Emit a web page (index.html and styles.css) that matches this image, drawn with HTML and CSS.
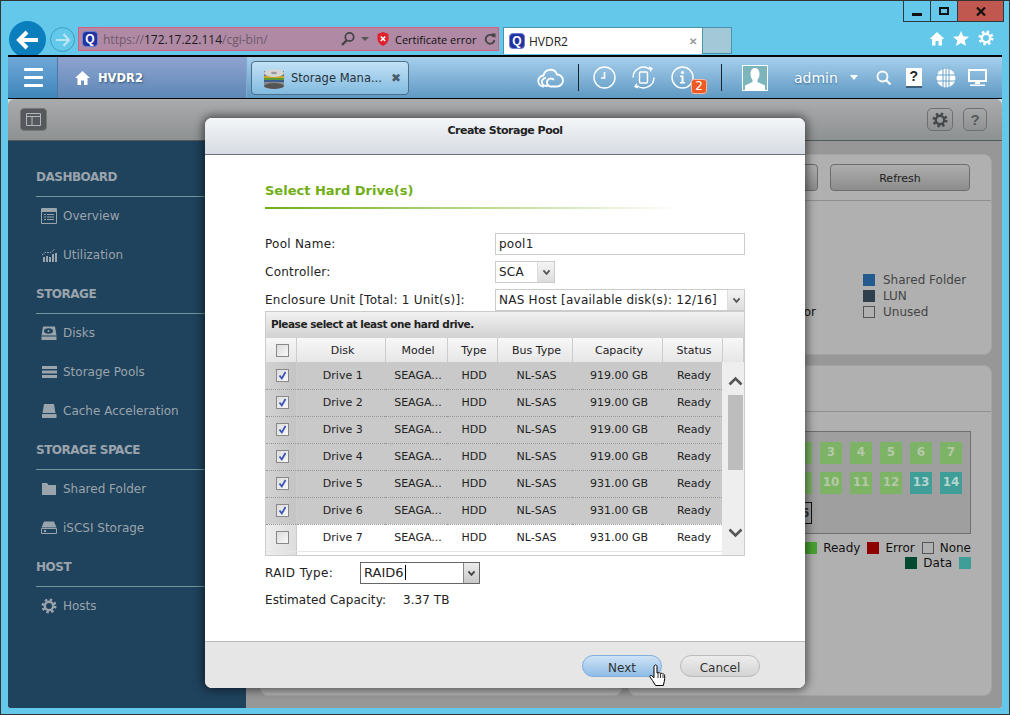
FILE: index.html
```html
<!DOCTYPE html>
<html lang="en">
<head>
    <meta charset="UTF-8">
    <title>HVDR2</title>
    <link rel="stylesheet" href="styles.css">
</head>
<body>
<svg class="defs" width="0" height="0">
    <symbol id="tick" viewBox="0 0 13 13"><path d="M3.500 6.500l2.300 3L9.500 3" fill="none" stroke="#3a55b5" stroke-width="1.800"/></symbol>
    <symbol id="gear" viewBox="0 0 16 16"><circle cx="8" cy="8" r="4.200" fill="none" stroke="currentColor" stroke-width="2.400"/><circle cx="8" cy="8" r="6.200" fill="none" stroke="currentColor" stroke-width="2.600" stroke-dasharray="2.400 2.470"/></symbol>
    <symbol id="arrow-down" viewBox="0 0 10 8"><path d="M1.500 1.500L5 5.500l3.500-4" fill="none" stroke="currentColor" stroke-width="2"/></symbol>
</svg>
<div class="window">
    <header class="chrome">
        <div class="nav-btn back"><svg width="24" height="20" viewBox="0 0 24 20"><path d="M11 2L3 10l8 8M3 10h19" fill="none" stroke="#fff" stroke-width="4"/></svg></div>
        <div class="nav-btn forward"><svg width="16" height="14" viewBox="0 0 16 14"><path d="M8.500 1L14 7l-5.500 6M14 7H1" fill="none" stroke="#b9e6f5" stroke-width="2.200"/></svg></div>
        <div class="address">
            <span class="favicon">Q</span>
            <span class="url">https://<b>172.17.22.114</b>/cgi-bin/</span>
            <svg class="addr-search" width="16" height="16" viewBox="0 0 16 16"><circle cx="9.500" cy="6" r="4.200" fill="none" stroke="#444" stroke-width="1.800"/><path d="M6.500 9.500L2 14" stroke="#444" stroke-width="2.400"/></svg>
            <span class="addr-caret"></span>
            <svg class="shield" width="12" height="14" viewBox="0 0 12 14"><path d="M6 0l5.500 2v5c0 3-2.500 5.500-5.500 7C3 12.500.5 10 .5 7V2z" fill="#e0202a"/><path d="M3.800 4.500l4.400 4.500M8.200 4.500L3.800 9" stroke="#fff" stroke-width="1.600"/></svg>
            <span class="cert">Certificate error</span>
            <svg class="addr-refresh" width="12" height="12" viewBox="0 0 12 12"><path d="M9.800 4A4.400 4.400 0 1 0 10.400 7" fill="none" stroke="#444" stroke-width="1.800"/><path d="M7 .5h4.500V5z" fill="#444"/></svg>
        </div>
        <div class="ie-tab">
            <span class="favicon">Q</span>
            <span class="ie-tab-title">HVDR2</span>
            <span class="ie-tab-close">✕</span>
        </div>
        <div class="ie-tab-new"></div>
        <div class="chrome-right">
            <div class="win-controls">
                <div class="win-btn"><span class="win-min"></span></div>
                <div class="win-btn"><span class="win-max"></span></div>
                <div class="win-btn close"><svg width="10" height="9" viewBox="0 0 10 9"><path d="M1 .5l8 8M9 .5l-8 8" stroke="#111" stroke-width="2.200"/></svg></div>
            </div>
            <div class="chrome-icons">
                <svg width="16" height="15" viewBox="0 0 16 15"><path d="M8 1L.5 8H3v6.500h3.500V10h3v4.500H13V8h2.500z" fill="#fff"/></svg>
                <svg width="16" height="15" viewBox="0 0 16 15"><path d="M8 0l2.300 5.200 5.700.5-4.300 3.700 1.300 5.600L8 12l-5 3 1.300-5.600L0 5.700l5.700-.5z" fill="#fff"/></svg>
                <svg class="chrome-gear" width="16" height="16"><use href="#gear"/></svg>
            </div>
        </div>
    </header>

    <div class="app">
        <nav class="topnav">
            <div class="menu-btn"><span></span><span></span><span></span></div>
            <div class="host">
                <svg width="15" height="15" viewBox="0 0 15 15"><path d="M7.500 1L0 8h2.500v7h3.500v-4.500h3V15h3.500V8H15z" fill="#fff"/></svg>
                <span>HVDR2</span>
            </div>
            <div class="app-tab">
                <svg width="22" height="21" viewBox="0 0 22 21">
                    <rect x="1" y="3" width="20" height="15" fill="#777"/>
                    <rect x="1" y="8" width="20" height="2" fill="#c9a52a"/>
                    <rect x="1" y="10" width="20" height="2" fill="#5d9a35"/>
                    <rect x="1" y="12" width="20" height="2" fill="#3b5f8f"/>
                    <rect x="1" y="14" width="20" height="4" fill="#8a8a8a"/>
                    <ellipse cx="11" cy="18" rx="10" ry="3" fill="#555"/>
                    <ellipse cx="11" cy="5" rx="10" ry="4" fill="#d5d5d5"/>
                    <ellipse cx="11" cy="5" rx="3" ry="1.200" fill="#999"/>
                </svg>
                <span class="app-tab-title">Storage Mana...</span>
                <span class="app-tab-close">✖</span>
            </div>
            <div class="tools">
                <svg class="t-cloud" width="27" height="20" viewBox="0 0 27 20"><path d="M7 18.500a5.500 5.500 0 0 1-.5-11A7 7 0 0 1 20 6.500a5.800 5.800 0 0 1 0 12h-6a4 4 0 1 1 3-6.500M9 10a4 4 0 1 0 3 6.500" fill="none" stroke="#fff" stroke-width="1.800"/></svg>
                <span class="t-sep"></span>
                <svg class="t-clock" width="23" height="23" viewBox="0 0 23 23"><circle cx="11.500" cy="11.500" r="10.500" fill="none" stroke="#fff" stroke-width="1.400"/><path d="M11.500 6v6H8" fill="none" stroke="#fff" stroke-width="1.600"/></svg>
                <svg class="t-sync" width="23" height="23" viewBox="0 0 23 23"><rect x="7.500" y="6" width="8" height="11" rx="1" fill="none" stroke="#fff" stroke-width="1.400"/><path d="M1 11.500A10.500 10.500 0 0 1 17.500 3M22 11.500A10.500 10.500 0 0 1 5.500 20" fill="none" stroke="#fff" stroke-width="1.400"/><path d="M16.500 .5L21 2l-2.500 4zM6.500 22.500L2 21l2.500-4z" fill="#fff"/></svg>
                <div class="t-info">
                    <svg width="23" height="23" viewBox="0 0 23 23"><circle cx="11.500" cy="11.500" r="10.500" fill="none" stroke="#fff" stroke-width="1.400"/><circle cx="11.500" cy="6.500" r="1.600" fill="#fff"/><path d="M9 9.500h3.500V16H14v1.500H9V16h1.500v-5H9z" fill="#fff"/></svg>
                    <span class="badge">2</span>
                </div>
                <span class="t-sep second"></span>
                <div class="avatar"><svg width="24" height="24" viewBox="0 0 24 24"><path d="M7.500 8c0-4 2-6 4.500-6s4.500 2 4.500 6c0 2.500-1 4.500-2 6v2l7.500 3.500V24H2v-4.500L9.500 16v-2c-1-1.500-2-3.500-2-6z" fill="#fff"/></svg></div>
                <span class="user">admin</span>
                <span class="user-caret"></span>
                <svg class="t-search" width="15" height="15" viewBox="0 0 15 15"><circle cx="6.500" cy="6.500" r="5" fill="none" stroke="#fff" stroke-width="1.800"/><path d="M10 10l4.500 4.500" stroke="#fff" stroke-width="2"/></svg>
                <div class="t-help"><span>?</span></div>
                <svg class="t-globe" width="20" height="20" viewBox="0 0 20 20"><circle cx="10" cy="10" r="9.500" fill="#fff"/><path d="M0 7h20M0 13h20M7 0v20M13 0v20M10 0v20" stroke="#6ba3c9" stroke-width="1"/></svg>
                <svg class="t-monitor" width="19" height="18" viewBox="0 0 19 18"><rect x="1" y="1" width="17" height="11" fill="none" stroke="#fff" stroke-width="2"/><path d="M7 13h5v2H7zM2 15.500h15V17H2z" fill="#fff"/></svg>
            </div>
        </nav>

        <div class="workspace">
            <div class="toolbar">
                <div class="tb-layout"><svg width="15" height="13" viewBox="0 0 15 13"><path d="M.5.500h14v12H.5zM.5 3.500h14M6 3.500v9" fill="none" stroke="#b5b8bb"/></svg></div>
                <div class="tb-btn gear-btn"><svg width="16" height="16"><use href="#gear"/></svg></div>
                <div class="tb-btn help-btn">?</div>
            </div>
            <div class="content">
                <aside class="sidebar">
                    <div class="side-head">DASHBOARD</div>
                    <div class="side-item">
                        <svg width="16" height="16" viewBox="0 0 16 16"><path d="M.5.500h15v15H.5z" fill="none" stroke="#9aa4ac"/><path d="M1 1h14v3H1z" fill="#9aa4ac"/><path d="M3 6h2v1H3zM6 6h7v1H6zM3 8.500h2v1H3zM6 8.500h7v1H6zM3 11h2v1H3zM6 11h7v1H6z" fill="#9aa4ac"/></svg>
                        <span>Overview</span>
                    </div>
                    <div class="side-item">
                        <svg width="16" height="16" viewBox="0 0 16 16"><path d="M2 10h2v5H2zM5 9h2v6H5zM8 10h2v5H8zM11 7h2v8h-2zM14 6h2v9h-2z" fill="#9aa4ac"/><path d="M1 8l4-3 4 1 5-4" fill="none" stroke="#9aa4ac" stroke-dasharray="2 1"/></svg>
                        <span>Utilization</span>
                    </div>
                    <div class="side-head">STORAGE</div>
                    <div class="side-item">
                        <svg width="16" height="16" viewBox="0 0 16 16"><path d="M2 1.500h12l1.500 9H.5z" fill="#9aa4ac"/><ellipse cx="7.500" cy="6" rx="4.500" ry="2.800" fill="#1f425d"/><circle cx="7.500" cy="6" r="1" fill="#9aa4ac"/><path d="M.5 11.500h15v3.500H.5z" fill="#9aa4ac"/></svg>
                        <span>Disks</span>
                    </div>
                    <div class="side-item">
                        <svg width="16" height="14" viewBox="0 0 16 14"><path d="M1 1h15v3H1zM1 5.500h15v3H1zM1 10h15v3H1z" fill="#9aa4ac"/></svg>
                        <span>Storage Pools</span>
                    </div>
                    <div class="side-item">
                        <svg width="16" height="14" viewBox="0 0 16 14"><path d="M3 0h10l1.500 9h-13zM1 10h14.500v4H1z" fill="#9aa4ac"/></svg>
                        <span>Cache Acceleration</span>
                    </div>
                    <div class="side-head">STORAGE SPACE</div>
                    <div class="side-item">
                        <svg width="16" height="13" viewBox="0 0 16 13"><path d="M1 1h5l1.500 2H15v10H1z" fill="#9aa4ac"/></svg>
                        <span>Shared Folder</span>
                    </div>
                    <div class="side-item">
                        <svg width="16" height="13" viewBox="0 0 16 13"><path d="M3 .5h10l2.500 6H.5z" fill="#9aa4ac"/><path d="M.5 7.500h15v5H.5z" fill="none" stroke="#9aa4ac"/><circle cx="4" cy="10" r="1.200" fill="#9aa4ac"/></svg>
                        <span>iSCSI Storage</span>
                    </div>
                    <div class="side-head">HOST</div>
                    <div class="side-item">
                        <svg width="16" height="16"><use href="#gear"/></svg>
                        <span>Hosts</span>
                    </div>
                </aside>

                <main class="panels">
                    <section class="panel">
                        <div class="panel-head">
                            <div class="bg-btn"></div>
                            <div class="bg-btn refresh">Refresh</div>
                        </div>
                    </section>
                    <section class="panel right">
                        <div class="panel-head">
                            <div class="bg-btn"></div>
                            <div class="bg-btn refresh">Refresh</div>
                        </div>
                        <div class="usage">
                            <span class="usage-error">Error</span>
                            <ul class="usage-legend">
                                <li><i class="sw sw-blue"></i>Shared Folder</li>
                                <li><i class="sw sw-slate"></i>LUN</li>
                                <li><i class="sw sw-empty"></i>Unused</li>
                            </ul>
                        </div>
                    </section>
                    <section class="panel"></section>
                    <section class="panel right">
                        <div class="panel-head"></div>
                        <div class="rack">
                            <div class="disks">
                                <span class="disk">1</span><span class="disk">2</span><span class="disk">3</span><span class="disk">4</span><span class="disk">5</span><span class="disk">6</span><span class="disk">7</span>
                                <span class="disk">8</span><span class="disk">9</span><span class="disk">10</span><span class="disk">11</span><span class="disk">12</span><span class="disk data">13</span><span class="disk data">14</span>
                                <span class="disk none">15</span><span class="disk none">16</span>
                            </div>
                        </div>
                        <div class="rack-legend">
                            <i class="sw sw-green"></i><span>Ready</span>
                            <i class="sw sw-red"></i><span>Error</span>
                            <i class="sw sw-empty"></i><span>None</span>
                        </div>
                        <div class="rack-legend">
                            <i class="sw sw-dark"></i><span>Data</span>
                            <i class="sw sw-teal"></i>
                        </div>
                    </section>
                </main>
            </div>
        </div>
    </div>

    <div class="dialog">
        <div class="dialog-title">Create Storage Pool</div>
        <div class="dialog-body">
            <h2>Select Hard Drive(s)</h2>
            <div class="h-rule"></div>
            <div class="form">
                <label>Pool Name:</label>
                <div class="field">pool1</div>
                <label>Controller:</label>
                <div class="field short">SCA<span class="drop"><svg width="9" height="7"><use href="#arrow-down"/></svg></span></div>
                <label>Enclosure Unit [Total: 1 Unit(s)]:</label>
                <div class="field">NAS Host [available disk(s): 12/16]<span class="drop"><svg width="9" height="7"><use href="#arrow-down"/></svg></span></div>
            </div>
            <div class="grid">
                <div class="grid-title">Please select at least one hard drive.</div>
                <table class="grid-head">
                    <colgroup><col class="c0"><col class="c1"><col class="c2"><col class="c3"><col class="c4"><col class="c5"><col class="c6"><col></colgroup>
                    <tr><th><span class="check"></span></th><th>Disk</th><th>Model</th><th>Type</th><th>Bus Type</th><th>Capacity</th><th>Status</th><th></th></tr>
                </table>
                <div class="grid-main">
                    <table class="grid-body">
                        <colgroup><col class="c0"><col class="c1"><col class="c2"><col class="c3"><col class="c4"><col class="c5"><col class="c6"></colgroup>
                        <tr class="sel"><td><span class="check"><svg width="13" height="13"><use href="#tick"/></svg></span></td><td>Drive 1</td><td>SEAGA...</td><td>HDD</td><td>NL-SAS</td><td>919.00 GB</td><td>Ready</td></tr>
                        <tr class="sel"><td><span class="check"><svg width="13" height="13"><use href="#tick"/></svg></span></td><td>Drive 2</td><td>SEAGA...</td><td>HDD</td><td>NL-SAS</td><td>919.00 GB</td><td>Ready</td></tr>
                        <tr class="sel"><td><span class="check"><svg width="13" height="13"><use href="#tick"/></svg></span></td><td>Drive 3</td><td>SEAGA...</td><td>HDD</td><td>NL-SAS</td><td>919.00 GB</td><td>Ready</td></tr>
                        <tr class="sel"><td><span class="check"><svg width="13" height="13"><use href="#tick"/></svg></span></td><td>Drive 4</td><td>SEAGA...</td><td>HDD</td><td>NL-SAS</td><td>919.00 GB</td><td>Ready</td></tr>
                        <tr class="sel"><td><span class="check"><svg width="13" height="13"><use href="#tick"/></svg></span></td><td>Drive 5</td><td>SEAGA...</td><td>HDD</td><td>NL-SAS</td><td>931.00 GB</td><td>Ready</td></tr>
                        <tr class="sel"><td><span class="check"><svg width="13" height="13"><use href="#tick"/></svg></span></td><td>Drive 6</td><td>SEAGA...</td><td>HDD</td><td>NL-SAS</td><td>931.00 GB</td><td>Ready</td></tr>
                        <tr><td><span class="check"></span></td><td>Drive 7</td><td>SEAGA...</td><td>HDD</td><td>NL-SAS</td><td>931.00 GB</td><td>Ready</td></tr>
                        <tr><td></td><td></td><td></td><td></td><td></td><td></td><td></td></tr>
                    </table>
                    <div class="scrollbar">
                        <svg class="sb-up" width="15" height="10" viewBox="0 0 15 10"><path d="M1.500 8.500l6-6 6 6" fill="none" stroke="#555" stroke-width="2.600"/></svg>
                        <div class="sb-thumb"></div>
                        <svg class="sb-down" width="15" height="10" viewBox="0 0 15 10"><path d="M1.500 1.500l6 6 6-6" fill="none" stroke="#555" stroke-width="2.600"/></svg>
                    </div>
                </div>
            </div>
            <div class="raid">
                <label>RAID Type:</label>
                <div class="combo"><span class="combo-text"><span class="caret-text">RAID6</span></span><span class="combo-drop"><svg width="9" height="7"><use href="#arrow-down"/></svg></span></div>
            </div>
            <div class="estimate"><span>Estimated Capacity:</span><span>3.37 TB</span></div>
        </div>
        <div class="dialog-foot">
            <div class="pill primary">Next</div>
            <div class="pill">Cancel</div>
        </div>
        <svg class="hand" width="19" height="23" viewBox="0 0 18 23"><path d="M5 1.500c1-1 2.500-.5 2.500 1V9l1-.3c1-.3 1.800 0 2 .7 1-.5 2-.2 2.300.6 1-.4 2.200.2 2.300 1.300.2 2 .2 4-.3 6l-1 4.200H6l-3-5-2.500-3.500c-.5-1 .5-2 1.500-1.500l2.500 2.200V3c0-.6 0-1 .5-1.500z" fill="#fff" stroke="#000"/><path d="M8.500 9v5M11 10v4M13.500 11v3" stroke="#000" stroke-width=".8"/></svg>
    </div>
</div>
</body>
</html>
```

FILE: styles.css
```css
* {
    box-sizing: border-box;
}

body {
    margin: 0;
    font-family: "DejaVu Sans", Verdana, sans-serif;
    font-size: 12px;
}

.defs {
    position: absolute;
}

.window {
    position: relative;
    width: 1010px;
    height: 715px;
    overflow: hidden;
    background: #64c8ea;
    border: 1px solid #333;
}

/* browser chrome */
.chrome {
    display: flex;
    height: 54px;
    padding-left: 8px;
    font-family: "Open Sans", sans-serif;
}

.nav-btn {
    display: flex;
    align-items: center;
    justify-content: center;
    border-radius: 50%;
    flex: none;
}

.back {
    width: 37px;
    height: 37px;
    margin-top: 20px;
    background: #0b7fbd;
}

.forward {
    width: 25px;
    height: 25px;
    margin: 26px 3px 0 4px;
    border: 1px solid #3f9cc0;
}

.address {
    display: flex;
    align-items: center;
    width: 421px;
    height: 24px;
    margin-top: 26px;
    padding-left: 3px;
    flex: none;
    background: #b08aa5;
    border: 1px solid #d65f7f;
}

.favicon {
    width: 16px;
    height: 16px;
    flex: none;
    border-radius: 4px;
    background: #22339f;
    border: 1px solid #6d7fd0;
    color: #fff;
    font: bold 12px/14px "Liberation Sans", sans-serif;
    text-align: center;
}

.url {
    width: 237px;
    margin-left: 5px;
    color: #6e5a6c;
    font-size: 12px;
}

.url b {
    color: #1c1c1c;
    font-weight: 400;
}

.addr-caret {
    width: 0;
    height: 0;
    margin: 0 8px 0 5px;
    border: 4px solid transparent;
    border-top-color: #555;
    border-bottom: 0;
}

.cert {
    width: 89px;
    margin-left: 6px;
    color: #111;
    font-size: 11px;
    white-space: nowrap;
}

.ie-tab {
    display: flex;
    align-items: center;
    width: 200px;
    height: 27px;
    margin: 26px 0 0 4px;
    padding-left: 5px;
    flex: none;
    background: #fff;
    border: 1px solid #4a93ac;
    border-bottom: 0;
}

.ie-tab-title {
    margin-left: 4px;
    color: #222;
    font-size: 12px;
}

.ie-tab-close {
    margin-left: auto;
    margin-right: 5px;
    color: #999;
    font-size: 10px;
    font-weight: 700;
}

.ie-tab-new {
    width: 29px;
    height: 27px;
    margin-top: 26px;
    flex: none;
    background: #a3c8d8;
    border: 1px solid #4a93ac;
    border-width: 0 1px 1px 0;
    border-top: 1px solid #4a93ac;
}

.chrome-right {
    display: flex;
    flex-direction: column;
    align-items: flex-end;
    margin-left: auto;
    padding-right: 5px;
}

.win-controls {
    display: flex;
    height: 21px;
    border: 1px solid #2b3a40;
    border-top: 0;
}

.win-btn {
    display: flex;
    align-items: center;
    justify-content: center;
    width: 27px;
    border-right: 1px solid #2b3a40;
}

.win-btn.close {
    width: 45px;
    border-right: 0;
    background: #c0584f;
}

.win-min {
    width: 10px;
    height: 3px;
    margin-top: 6px;
    background: #111;
}

.win-max {
    width: 10px;
    height: 8px;
    border: 2px solid #111;
}

.chrome-icons {
    display: flex;
    align-items: center;
    gap: 8px;
    margin-top: 8px;
    padding-right: 10px;
}

.chrome-gear {
    margin-left: 1px;
    color: #fff;
}

/* app */
.app {
    display: flex;
    flex-direction: column;
    position: relative;
    width: 994px;
    height: 653px;
    margin-left: 7px;
    background: #cfe6f2;
}

.topnav {
    display: flex;
    height: 44px;
    flex: none;
    background: linear-gradient(#a6cfec, #5f99c3);
    border-top: 2px solid #050505;
    border-bottom: 1px solid #050505;
}

.menu-btn {
    display: flex;
    flex-direction: column;
    justify-content: center;
    gap: 5px;
    width: 50px;
    padding-left: 16px;
    background: linear-gradient(#6fa8d8, #3f86ba);
    border-right: 1px solid #5076a8;
}

.menu-btn span {
    width: 19px;
    height: 3px;
    border-radius: 1px;
    background: #fff;
}

.host {
    display: flex;
    align-items: center;
    gap: 8px;
    width: 189px;
    padding-left: 17px;
    background: linear-gradient(#8fa3d0, #5d88b6);
    border-right: 1px solid #83a7c9;
    color: #fff;
    font-size: 11.500px;
    font-weight: 700;
    text-shadow: 1px 1px 2px #33577a;
}

.app-tab {
    display: flex;
    align-items: center;
    width: 158px;
    height: 34px;
    margin: 4px 0 0 4px;
    padding-left: 11px;
    background: linear-gradient(#c2e1f5, #82bbdf);
    border: 1px solid #4c6f8c;
    border-radius: 4px;
}

.app-tab-title {
    margin-left: 6px;
    color: #26323c;
    font-size: 11.500px;
    white-space: nowrap;
}

.app-tab-close {
    margin-left: 9px;
    color: #4a5c6c;
    font-size: 12px;
}

.tools {
    display: flex;
    align-items: center;
    color: #fff;
}

.tools svg,
.tools div,
.tools span {
    flex: none;
}

.t-cloud {
    margin-left: 128px;
}

.t-sep {
    width: 1px;
    height: 27px;
    margin-left: 14px;
    background: #16222c;
}

.t-clock {
    margin-left: 14px;
}

.t-sync {
    margin-left: 16px;
}

.t-info {
    position: relative;
    width: 23px;
    height: 23px;
    margin-left: 16px;
}

.badge {
    position: absolute;
    left: 20px;
    top: 13px;
    width: 16px;
    height: 15px;
    border-radius: 3px;
    background: #ee5a24;
    border: 1px solid #f6b9a0;
    color: #fff;
    font-size: 12px;
    line-height: 13px;
    text-align: center;
}

.t-sep.second {
    margin-left: 27px;
}

.avatar {
    display: flex;
    align-items: flex-end;
    justify-content: center;
    width: 26px;
    height: 26px;
    margin-left: 20px;
    background: #7db5bd;
    border: 1px solid #fff;
}

.user {
    margin-left: 26px;
    font-size: 14px;
    text-shadow: 0 1px 2px #3b6d92;
}

.user-caret {
    width: 0;
    height: 0;
    margin-left: 12px;
    border: 4px solid transparent;
    border-top: 5px solid #fff;
    border-bottom: 0;
}

.t-search {
    margin-left: 18px;
}

.t-help {
    width: 16px;
    height: 20px;
    margin-left: 15px;
    background: #fff;
    border-bottom: 2px solid #3c5f78;
    color: #222;
    font: bold 14px/17px "Liberation Sans", sans-serif;
    text-align: center;
}

.t-globe {
    margin-left: 14px;
}

.t-monitor {
    margin-left: 12px;
}

.workspace {
    display: flex;
    flex-direction: column;
    flex: 1;
    overflow: hidden;
    border-radius: 6px 6px 2px 2px;
}

.toolbar {
    display: flex;
    align-items: center;
    height: 42px;
    flex: none;
    padding: 0 15px 0 12px;
    background: linear-gradient(#aaabac, #8e9192);
    border-bottom: 1px solid #515a5c;
}

.tb-layout {
    display: flex;
    align-items: center;
    justify-content: center;
    width: 27px;
    height: 23px;
    margin-right: auto;
    background: #55585d;
    border: 1px solid #777;
    border-radius: 4px;
}

.tb-btn {
    display: flex;
    align-items: center;
    justify-content: center;
    height: 23px;
    background: linear-gradient(#a5a6a7, #909192);
    border: 1px solid #6d7071;
    border-radius: 5px;
    color: #44484b;
}

.gear-btn {
    width: 26px;
    margin-right: 10px;
}

.help-btn {
    width: 24px;
    font: bold 15px "Liberation Sans", sans-serif;
    color: #55595c;
}

.content {
    display: flex;
    flex: 1;
    min-height: 0;
}

.sidebar {
    width: 238px;
    flex: none;
    padding: 16px 0 0 28px;
    background: #1f425d;
    color: #9aa4ac;
}

.side-head {
    height: 40px;
    padding-top: 13px;
    margin-bottom: -1px;
    border-bottom: 1px solid #6e9a9e;
    font-size: 12px;
    font-weight: 700;
    letter-spacing: -.5px;
}

.side-item {
    display: flex;
    align-items: center;
    gap: 6px;
    height: 39px;
    padding-left: 5px;
    font-size: 12px;
}

.side-item svg {
    color: #9aa4ac;
    flex: none;
}

.panels {
    display: grid;
    grid-template-columns: 362px 364px;
    grid-template-rows: 201px 331px;
    column-gap: 6px;
    row-gap: 10px;
    flex: 1;
    padding: 13px 0 0 14px;
    background: #979797;
}

.panel {
    background: #b0b0b0;
    border: 1px solid #a4a4a4;
    border-radius: 8px;
    color: #444;
}

.panel-head {
    display: flex;
    justify-content: flex-end;
    gap: 12px;
    height: 46px;
    padding: 9px 21px 0 0;
    border-bottom: 1px solid #8f8f8f;
}

.bg-btn {
    width: 140px;
    height: 27px;
    background: linear-gradient(#aeaeae, #8c8c8c);
    border: 1px solid #6c6c6c;
    border-radius: 4px;
    color: #222;
    font-size: 11px;
    line-height: 27px;
    text-align: center;
}

.usage {
    display: flex;
    justify-content: flex-end;
    align-items: flex-end;
    gap: 47px;
    height: 119px;
}

.usage-error {
    color: #111;
    line-height: 16px;
    margin-bottom: 0;
}

.usage-legend {
    width: 128px;
    margin: 0;
    padding: 0;
    list-style: none;
}

.usage-legend li {
    display: flex;
    align-items: center;
    gap: 8px;
    height: 16px;
}

.sw {
    display: block;
    width: 12px;
    height: 12px;
    flex: none;
}

.sw-blue { background: #245a8e; }
.sw-slate { background: #2f3f4b; }
.sw-empty { border: 1px solid #555; }
.sw-green { background: #48a032; }
.sw-red { background: #8f0000; }
.sw-dark { background: #03492f; }
.sw-teal { background: #3f9e98; }

.rack {
    height: 103px;
    margin: 19px 20px 0 0;
    padding: 10px 8px 0 0;
    background: #9f9f9f;
    border: 1px solid #6f6f6f;
}

.disks {
    display: grid;
    grid-template-columns: repeat(7, 22px);
    gap: 8px;
    justify-content: end;
}

.disk {
    height: 22px;
    background: #7cb364;
    color: #b4c8a8;
    font-size: 12px;
    font-weight: 700;
    line-height: 21px;
    text-align: center;
}

.disk.data {
    background: #3f9e98;
    color: #b5d4d0;
}

.disk.none {
    background: transparent;
    border: 1px solid #111;
    color: #333;
}

.rack-legend {
    display: flex;
    justify-content: flex-end;
    align-items: center;
    gap: 6px;
    height: 15px;
    margin-right: 20px;
    color: #111;
}

.rack-legend:nth-of-type(3) {
    margin-top: 6px;
}

.rack-legend i {
    margin-left: 1px;
}

/* dialog over the page */
.dialog {
    position: absolute;
    left: 204px;
    top: 117px;
    display: flex;
    flex-direction: column;
    width: 600px;
    height: 570px;
    background: #fff;
    border-radius: 7px;
    box-shadow: 0 0 10px 2px rgba(0, 0, 0, .55);
    color: #222;
}

.dialog-title {
    height: 37px;
    flex: none;
    padding-top: 6px;
    background: linear-gradient(#f4f6f8, #d6dce3);
    border-bottom: 1px solid #6d7277;
    border-radius: 7px 7px 0 0;
    font-size: 11px;
    font-weight: 700;
    letter-spacing: -.5px;
    text-align: center;
}

.dialog-body {
    flex: 1;
    padding: 25px 60px 0;
}

.dialog-body h2 {
    margin: 0;
    color: #6fae14;
    font-size: 13px;
    line-height: 22px;
}

.h-rule {
    width: 415px;
    height: 2px;
    margin: 5px 0 24px;
    background: linear-gradient(to right, #6fb010, rgba(111, 176, 16, 0));
}

.form {
    display: grid;
    grid-template-columns: 230px 250px;
    grid-auto-rows: 22px;
    row-gap: 6px;
    align-items: center;
    letter-spacing: .25px;
}

.field {
    display: flex;
    align-items: center;
    height: 22px;
    padding-left: 3px;
    border: 1px solid #ccc;
    white-space: nowrap;
}

.field.short {
    width: 60px;
}

.drop {
    display: flex;
    align-items: center;
    justify-content: center;
    width: 17px;
    height: 20px;
    margin-left: auto;
    flex: none;
    background: linear-gradient(#f4f4f4, #dcdcdc);
    border-left: 1px solid #ddd;
    color: #555;
}

.grid {
    width: 480px;
    height: 245px;
    overflow: hidden;
    border: 1px solid #ccc;
    font-size: 11px;
}

.grid-title {
    height: 26px;
    padding: 6px 0 0 5px;
    background: linear-gradient(#f2f2f2, #d2d2d2);
    font-size: 10.500px;
    font-weight: 700;
    letter-spacing: -.47px;
}

.grid table {
    width: 100%;
    table-layout: fixed;
    border-collapse: collapse;
}

.c0 { width: 30px; }
.c1 { width: 89px; }
.c2 { width: 62px; }
.c3 { width: 50px; }
.c4 { width: 75px; }
.c5 { width: 90px; }
.c6 { width: 60px; }

.grid-head th {
    height: 24px;
    padding: 0 0 0 4px;
    background: linear-gradient(#f7f7f7, #e6e6e6);
    border-right: 1px solid #ccc;
    font-weight: 400;
}

.grid-main {
    display: flex;
    height: 193px;
}

.grid-body {
    width: 456px !important;
    flex: none;
    align-self: flex-start;
}

.grid-body td {
    height: 27px;
    padding: 0 0 0 4px;
    border-bottom: 1px solid #e6e6e6;
    text-align: center;
}

.grid-body td:first-child {
    background: linear-gradient(to right, #eee, #ddd);
    border-right: 1px solid #ccc;
}

.grid-body .sel td {
    background: #c9c9c9;
    border-bottom: 1px dotted #999;
}

.grid-body .sel td:first-child {
    background: linear-gradient(to right, #d2d2d2, #c4c4c4);
}

.check {
    display: inline-block;
    width: 13px;
    height: 13px;
    vertical-align: middle;
    background: linear-gradient(135deg, #dcdcdc, #f8f8f8);
    border: 1px solid #888;
}

.check svg {
    display: block;
    margin: -1px;
}

.scrollbar {
    display: flex;
    flex-direction: column;
    align-items: center;
    flex: 1;
    padding: 14px 0 0 4px;
    background: #eee;
}

.sb-thumb {
    width: 15px;
    height: 75px;
    margin: 9px 0 58px;
    background: #bdbdbd;
}

.raid {
    display: flex;
    align-items: center;
    height: 22px;
    margin-top: 6px;
}

.raid label {
    width: 95px;
    letter-spacing: .4px;
}

.combo {
    display: flex;
    width: 120px;
    height: 22px;
    border: 1px solid #666;
}

.combo-text {
    width: 102px;
    padding: 2px 0 0 3px;
    font-size: 13px;
}

.caret-text {
    padding-right: 1px;
    border-right: 1px solid #000;
}

.combo-drop {
    display: flex;
    align-items: center;
    justify-content: center;
    flex: 1;
    background: linear-gradient(#ececec, #c8c8c8);
    border-left: 1px solid #888;
    color: #444;
}

.estimate {
    display: flex;
    gap: 17px;
    margin-top: 8px;
    line-height: 16px;
    letter-spacing: .05px;
}

.dialog-foot {
    display: flex;
    justify-content: flex-end;
    gap: 18px;
    height: 47px;
    flex: none;
    padding: 13px 45px 0 0;
    background: #e6e6e6;
    border-top: 1px solid #bbb;
    border-radius: 0 0 7px 7px;
}

.pill {
    width: 80px;
    height: 22px;
    background: linear-gradient(#ececec, #d4d4d4);
    border: 1px solid #bbb;
    border-radius: 11px;
    color: #333;
    font-size: 12px;
    line-height: 24px;
    text-align: center;
}

.pill.primary {
    background: linear-gradient(#cfe3f5, #8fbde6);
    border-color: #7fb0e0;
}

.hand {
    position: absolute;
    left: 444px;
    top: 546px;
}
```
